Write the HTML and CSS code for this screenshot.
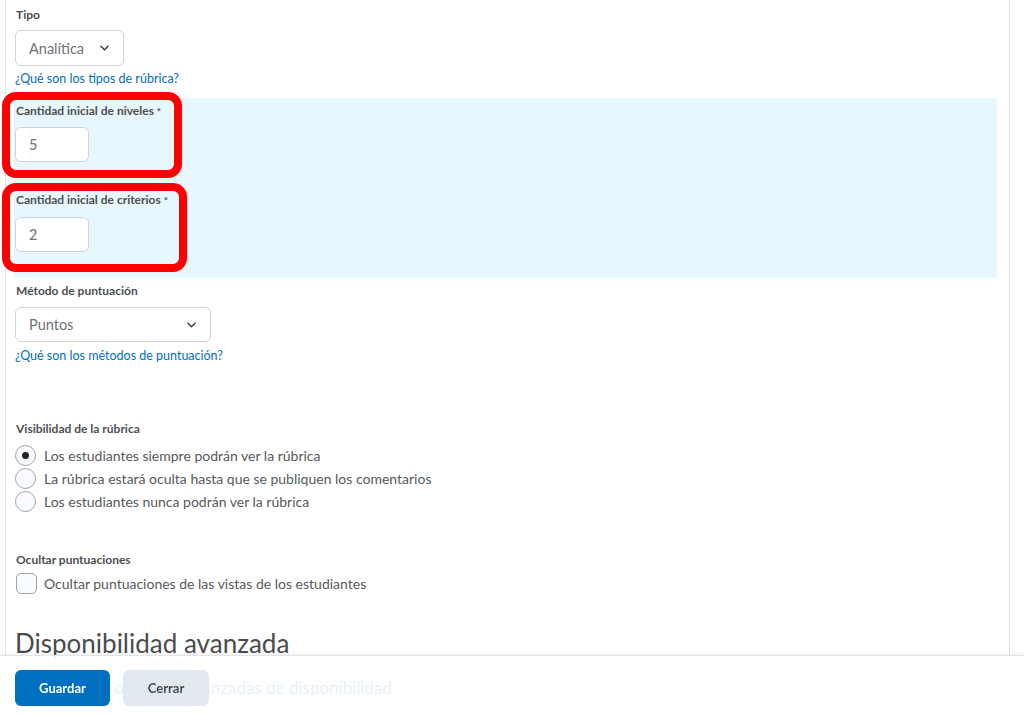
FILE: index.html
```html
<!DOCTYPE html>
<html lang="es">
<head>
  <meta charset="UTF-8">
  <title>Nueva rúbrica</title>
  <link rel="stylesheet" href="styles.css">
</head>
<body>
  <div class="page">
    <div class="field">
      <div class="label">Tipo</div>
      <div class="select select-type">
        <span>Analítica</span>
        <svg class="chevron" viewBox="0 0 10 6"><path d="M1 1l4 4 4-4" /></svg>
      </div>
      <a class="help" href="#">¿Qué son los tipos de rúbrica?</a>
    </div>

    <div class="init-panel">
      <div class="field">
        <div class="label">Cantidad inicial de niveles <span class="req">*</span></div>
        <div class="num-input">5</div>
      </div>
      <div class="field field-criteria">
        <div class="label">Cantidad inicial de criterios <span class="req">*</span></div>
        <div class="num-input">2</div>
      </div>
    </div>

    <div class="field field-scoring">
      <div class="label">Método de puntuación</div>
      <div class="select select-scoring">
        <span>Puntos</span>
        <svg class="chevron" viewBox="0 0 10 6"><path d="M1 1l4 4 4-4" /></svg>
      </div>
      <a class="help" href="#">¿Qué son los métodos de puntuación?</a>
    </div>

    <div class="field field-visibility">
      <div class="label">Visibilidad de la rúbrica</div>
      <div class="choices">
        <div class="choice"><span class="radio checked"></span>Los estudiantes siempre podrán ver la rúbrica</div>
        <div class="choice"><span class="radio"></span>La rúbrica estará oculta hasta que se publiquen los comentarios</div>
        <div class="choice"><span class="radio"></span>Los estudiantes nunca podrán ver la rúbrica</div>
      </div>
    </div>

    <div class="field field-hide">
      <div class="label">Ocultar puntuaciones</div>
      <div class="choice check-row"><span class="checkbox"></span>Ocultar puntuaciones de las vistas de los estudiantes</div>
    </div>

    <h2 class="section-title">Disponibilidad avanzada</h2>
    <a class="advanced-link" href="#">Mostrar opciones avanzadas de disponibilidad</a>
  </div>

  <!-- highlight annotations -->
  <div class="mark mark-levels"></div>
  <div class="mark mark-criteria"></div>

  <footer class="footer">
    <button class="btn btn-primary">Guardar</button>
    <button class="btn btn-secondary">Cerrar</button>
  </footer>
</body>
</html>
```

FILE: styles.css
```css
* {
  margin: 0;
  padding: 0;
  box-sizing: border-box;
}

:root {
  --text: #494c4e;
  --text-muted: #6e7376;
  --link: #006fbf;
  --border: #cdd5dc;
  --panel: #e8f6fd;
}

body {
  font-family: Lato, "Noto Sans", sans-serif;
  color: var(--text);
  background: #ffffff;
  overflow: hidden;
}

.page {
  margin-left: 5px;
  width: 1005px;
  min-height: 100vh;
  border-left: 1px solid #e6e6e6;
  border-right: 1px solid #dfe1e6;
  padding: 6px 12px 60px 9px;
}

.field {
  display: flex;
  flex-direction: column;
  align-items: flex-start;
}

.label {
  font-size: 12px;
  line-height: 18px;
  font-weight: 700;
  margin-left: 1px;
  color: #4c4f52;
}

.req {
  font-size: 10px;
  vertical-align: top;
}

.select {
  display: flex;
  align-items: center;
  justify-content: space-between;
  height: 36px;
  margin-top: 6px;
  padding: 0 14px 0 13px;
  border: 1px solid var(--border);
  border-radius: 6px;
  font-size: 14.5px;
  color: var(--text-muted);
}

.select-type {
  width: 109px;
}

.select-scoring {
  width: 196px;
  height: 35px;
  margin-top: 7px;
}

.chevron {
  width: 9px;
  height: 6px;
  fill: none;
  stroke: #303234;
  stroke-width: 1.4;
  stroke-linecap: round;
  stroke-linejoin: round;
}

.help {
  margin-top: 4px;
  font-size: 12.5px;
  line-height: 18px;
  color: var(--link);
  text-decoration: none;
}

.field-scoring .help {
  margin-top: 5px;
}

.init-panel {
  margin: 10px 0 0 -1px;
  padding: 4px 0 26px 1px;
  background: var(--panel);
}

.num-input {
  width: 74px;
  height: 35px;
  margin-top: 7px;
  padding-left: 13px;
  display: flex;
  align-items: center;
  background: #ffffff;
  border: 1px solid var(--border);
  border-radius: 6px;
  font-size: 14.5px;
  color: var(--text-muted);
}

.field-criteria {
  margin-top: 29px;
}

.field-criteria .num-input {
  margin-top: 8px;
}

.field-scoring {
  margin-top: 4px;
}

.field-visibility {
  margin-top: 55px;
}

.choices {
  margin-top: 6px;
}

.choice {
  display: flex;
  align-items: center;
  gap: 8px;
  height: 23px;
  font-size: 14px;
  color: #565a5c;
}

.radio {
  width: 21px;
  height: 21px;
  border-radius: 50%;
  border: 1px solid #9ea4a8;
  background: #f9fbff;
  display: flex;
  align-items: center;
  justify-content: center;
}

.radio.checked::after {
  content: "";
  width: 7px;
  height: 7px;
  border-radius: 50%;
  background: #202122;
}

.field-hide {
  margin-top: 38px;
}

.check-row {
  margin-top: 3px;
  height: 22px;
}

.checkbox {
  width: 21px;
  height: 21px;
  margin-left: 1px;
  margin-right: -1px;
  border: 1px solid #9ea4a8;
  border-radius: 5px;
  background: #f9fbff;
}

.section-title {
  margin-top: 33px;
  font-size: 26px;
  line-height: 32px;
  font-weight: 400;
  color: var(--text);
}

.advanced-link {
  display: block;
  margin: 19px 0 0 36px;
  font-size: 17px;
  line-height: 20px;
  color: var(--link);
  text-decoration: none;
}

.mark {
  position: absolute;
  left: 2px;
  border: 8px solid #ff0000;
  border-radius: 14px;
}

.mark-levels {
  top: 92px;
  width: 180px;
  height: 86px;
}

.mark-criteria {
  top: 183px;
  width: 185px;
  height: 89px;
}

.footer {
  position: fixed;
  left: 0;
  right: 0;
  bottom: 0;
  height: 59px;
  display: flex;
  align-items: flex-start;
  gap: 13px;
  padding: 14px 0 0 15px;
  background: rgba(255, 255, 255, 0.9);
  border-top: 1px solid #e3e4e7;
  box-shadow: 0 -2px 3px rgba(0, 0, 0, 0.05);
}

.btn {
  height: 36px;
  border: none;
  border-radius: 6px;
  font-family: inherit;
  font-size: 13px;
  font-weight: 700;
  cursor: pointer;
}

.btn-primary {
  width: 95px;
  background: #006fbf;
  color: #ffffff;
}

.btn-secondary {
  width: 86px;
  background: #e3e9f1;
  color: var(--text);
}
```
